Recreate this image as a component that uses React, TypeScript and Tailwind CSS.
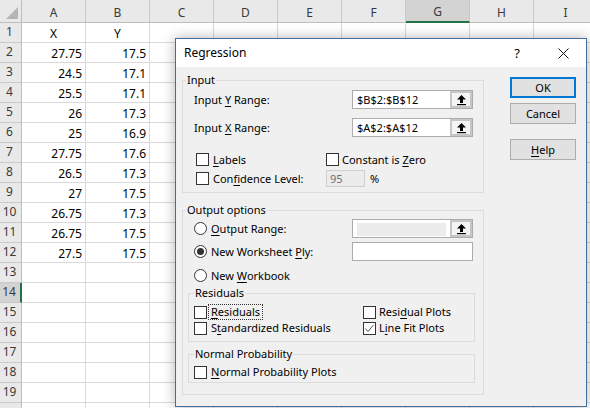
import React from 'react';

const cols = ['A', 'B', 'C', 'D', 'E', 'F', 'G', 'H', 'I'];

const data: Record<number, [string, string]> = {
  2: ['27.75', '17.5'],
  3: ['24.5', '17.1'],
  4: ['25.5', '17.1'],
  5: ['26', '17.3'],
  6: ['25', '16.9'],
  7: ['27.75', '17.6'],
  8: ['26.5', '17.3'],
  9: ['27', '17.5'],
  10: ['26.75', '17.3'],
  11: ['26.75', '17.5'],
  12: ['27.5', '17.5'],
};

// row 20 only peeks in at the bottom edge, its number is not visible
const rows = Array.from({ length: 20 }, (_, i) => i + 1);

const CheckBox: React.FC<{ checked?: boolean }> = ({ checked }) => (
  <span className="w-[13px] h-[13px] shrink-0 border border-[#333333] bg-white flex items-center justify-center">
    {checked && (
      <svg width="11" height="11" viewBox="0 0 11 11">
        <polyline points="1.5,5.5 4,8.5 9.5,2" fill="none" stroke="#5a5a5a" strokeWidth="1" />
      </svg>
    )}
  </span>
);

const Radio: React.FC<{ checked?: boolean }> = ({ checked }) => (
  <span className="w-[13px] h-[13px] shrink-0 rounded-full border border-[#333333] bg-white flex items-center justify-center">
    {checked && <span className="w-[7px] h-[7px] rounded-full bg-[#333333]"></span>}
  </span>
);

const UpArrow: React.FC = () => (
  <svg width="11" height="12" viewBox="0 0 11 12">
    <path d="M5.5 1 L10 5.5 H7 V9 H4 V5.5 H1 Z" fill="#000" />
    <rect x="1" y="10" width="9" height="1.2" fill="#000" />
  </svg>
);

const RefBox: React.FC<{ value?: string; disabled?: boolean }> = ({ value, disabled }) => (
  <div className="flex w-[121px] h-[19px] border border-[#acacac] bg-white">
    {disabled ? (
      <div className="flex-1 pl-[4px] pr-[4px] pt-[3px] pb-[1px]">
        <div className="w-full h-full bg-[#ececec]"></div>
      </div>
    ) : (
      <div className="flex-1 flex items-center pl-[4px] text-[11px] leading-[14px]">{value}</div>
    )}
    <div className="w-[22px] h-full border-2 border-[#c6c6c6] bg-[#f4f4f4] flex items-center justify-center">
      <UpArrow />
    </div>
  </div>
);

const Group: React.FC<{ title: string; className: string; legendLeft: string; children: React.ReactNode }> = ({
  title,
  className,
  legendLeft,
  children,
}) => (
  <div className={`relative border border-[#dcdcdc] ${className}`}>
    <span className={`absolute top-[-8px] ${legendLeft} px-[1px] bg-[#f0f0f0] leading-[14px]`}>{title}</span>
    {children}
  </div>
);

const Sheet: React.FC = () => (
  <div className="text-[12px] text-black">
    {/* column headers */}
    <div className="flex h-[23px]">
      <div className="w-[22px] shrink-0 h-full bg-[#e9e9e9] border-r border-b border-[#bdbdbd] relative">
        <svg className="absolute left-[6px] top-[7px]" width="12" height="12" viewBox="0 0 12 12">
          <polygon points="12,0 12,12 0,12" fill="#b5b5b5" />
        </svg>
      </div>
      {cols.map((c) => (
        <div
          key={c}
          className={`w-[64px] shrink-0 h-full flex items-center justify-center pt-[3px] text-[#3a3a3a] border-r border-[#c9c9c9] ${
            c === 'G' ? 'bg-[#d3d3d3] border-b-2 border-b-[#217346]' : 'bg-[#e9e9e9] border-b border-b-[#bdbdbd]'
          }`}
        >
          {c}
        </div>
      ))}
    </div>
    {/* rows */}
    {rows.map((r) => (
      <div key={r} className="flex h-[20px]">
        <div
          className={`w-[22px] shrink-0 h-full flex items-end justify-center pr-[2px] pb-[1px] text-[#3a3a3a] border-b border-b-[#c9c9c9] ${
            r === 14 ? 'bg-[#d3d3d3] border-r-2 border-r-[#217346]' : 'bg-[#e9e9e9] border-r border-r-[#bdbdbd]'
          }`}
        >
          {r < 20 ? r : ''}
        </div>
        {cols.map((c, ci) => {
          let text = '';
          let align = 'justify-end pr-[3px]';
          if (r === 1 && ci < 2) {
            text = ci === 0 ? 'X' : 'Y';
            align = 'justify-center';
          } else if (data[r] && ci < 2) {
            text = data[r][ci];
          }
          return (
            <div
              key={c}
              className={`w-[64px] shrink-0 h-full flex items-end leading-[16px] border-r border-b border-[#d9d9d9] ${align}`}
            >
              {text}
            </div>
          );
        })}
      </div>
    ))}
  </div>
);

const Dialog: React.FC = () => (
  <div className="absolute left-[175px] top-[38px] w-[412px] h-[369px] border border-[#41709f] bg-[#f0f0f0] flex flex-col text-[11px] leading-[14px] text-black shadow-[0_0_12px_rgba(0,0,0,0.3)]">
    {/* title bar */}
    <div className="h-[28px] shrink-0 bg-white flex items-center pl-[8px]">
      <span className="text-[12px]">Regression</span>
      <span className="ml-auto w-[20px] text-center text-[13px]">?</span>
      <span className="ml-[26px] mr-[13px] w-[20px] flex justify-center">
        <svg width="11" height="11" viewBox="0 0 11 11">
          <path d="M0.5 0.5 L10.5 10.5 M10.5 0.5 L0.5 10.5" stroke="#111" strokeWidth="1" />
        </svg>
      </span>
    </div>

    {/* body */}
    <div className="flex pl-[6px] pt-[10px]">
      <div className="w-[302px] mt-[3px]">
        {/* Input */}
        <Group title="Input" className="h-[113px] pl-[11px]" legendLeft="left-[3px]">
          <div className="flex items-center h-[19px] mt-[9px]">
            <span className="w-[158px]">
              Input <u className="underline-offset-2">Y</u> Range:
            </span>
            <RefBox value="$B$2:$B$12" />
          </div>
          <div className="flex items-center h-[19px] mt-[9px]">
            <span className="w-[158px]">
              Input <u className="underline-offset-2">X</u> Range:
            </span>
            <RefBox value="$A$2:$A$12" />
          </div>
          <div className="flex items-center h-[17px] mt-[14px] pl-[2px]">
            <div className="w-[130px] flex items-center gap-[4px]">
              <CheckBox />
              <span>
                <u className="underline-offset-2">L</u>abels
              </span>
            </div>
            <div className="flex items-center gap-[3px]">
              <CheckBox />
              <span>
                Constant is <u className="underline-offset-2">Z</u>ero
              </span>
            </div>
          </div>
          <div className="flex items-center h-[17px] mt-[2px] pl-[2px]">
            <div className="w-[130px] flex items-center gap-[4px]">
              <CheckBox />
              <span>
                Con<u className="underline-offset-2">f</u>idence Level:
              </span>
            </div>
            <div className="w-[39px] h-[17px] border border-[#cfcfcf] bg-[#ececec] flex items-center pl-[3px] text-[#707070]">
              95
            </div>
            <span className="ml-[5px]">%</span>
          </div>
        </Group>

        {/* Output options */}
        <Group title="Output options" className="h-[185px] mt-[17px]" legendLeft="left-[3px]">
          <div className="pl-[11px]">
            <div className="flex items-center h-[19px] mt-[8px]">
              <div className="w-[158px] flex items-center gap-[4px]">
                <Radio />
                <span>
                  <u className="underline-offset-2">O</u>utput Range:
                </span>
              </div>
              <RefBox disabled />
            </div>
            <div className="flex items-center h-[19px] mt-[4px]">
              <div className="w-[158px] flex items-center gap-[4px]">
                <Radio checked />
                <span>
                  New Worksheet <u className="underline-offset-2">P</u>ly:
                </span>
              </div>
              <div className="w-[121px] h-[19px] border border-[#acacac] bg-white"></div>
            </div>
            <div className="flex items-center h-[19px] mt-[5px]">
              <div className="flex items-center gap-[4px]">
                <Radio />
                <span>
                  New <u className="underline-offset-2">W</u>orkbook
                </span>
              </div>
            </div>
          </div>

          <Group title="Residuals" className="h-[49px] w-[287px] ml-[5px] mt-[8px] pl-[5px]" legendLeft="left-[5px]">
            <div className="flex items-center h-[16px] mt-[10px]">
              <div className="w-[169px] flex items-center gap-[2px]">
                <CheckBox />
                <span className="outline outline-1 outline-dotted outline-[#333333] px-[2px]">
                  <u className="underline-offset-2">R</u>esiduals
                </span>
              </div>
              <div className="flex items-center gap-[3px]">
                <CheckBox />
                <span>
                  Resi<u className="underline-offset-2">d</u>ual Plots
                </span>
              </div>
            </div>
            <div className="flex items-center h-[16px]">
              <div className="w-[169px] flex items-center gap-[4px]">
                <CheckBox />
                <span>
                  S<u className="underline-offset-2">t</u>andardized Residuals
                </span>
              </div>
              <div className="flex items-center gap-[3px]">
                <CheckBox checked />
                <span>
                  L<u className="underline-offset-2">i</u>ne Fit Plots
                </span>
              </div>
            </div>
          </Group>

          <Group
            title="Normal Probability"
            className="h-[29px] w-[287px] ml-[5px] mt-[12px] pl-[5px]"
            legendLeft="left-[5px]"
          >
            <div className="flex items-center h-[16px] mt-[9px] gap-[4px]">
              <CheckBox />
              <span>
                <u className="underline-offset-2">N</u>ormal Probability Plots
              </span>
            </div>
          </Group>
        </Group>
      </div>

      {/* buttons */}
      <div className="ml-[26px] w-[66px] flex flex-col">
        <button className="h-[21px] border-2 border-[#0078d7] bg-[#e1e1e1] flex items-center justify-center">OK</button>
        <button className="h-[21px] mt-[5px] border border-[#adadad] bg-[#e1e1e1] flex items-center justify-center">
          Cancel
        </button>
        <button className="h-[21px] mt-[15px] border border-[#adadad] bg-[#e1e1e1] flex items-center justify-center">
          <span>
            <u className="underline-offset-2">H</u>elp
          </span>
        </button>
      </div>
    </div>
  </div>
);

export default function App() {
  return (
    <div className="relative w-[590px] h-[408px] overflow-hidden bg-white font-['Noto_Sans',sans-serif]">
      <Sheet />
      <Dialog />
    </div>
  );
}
